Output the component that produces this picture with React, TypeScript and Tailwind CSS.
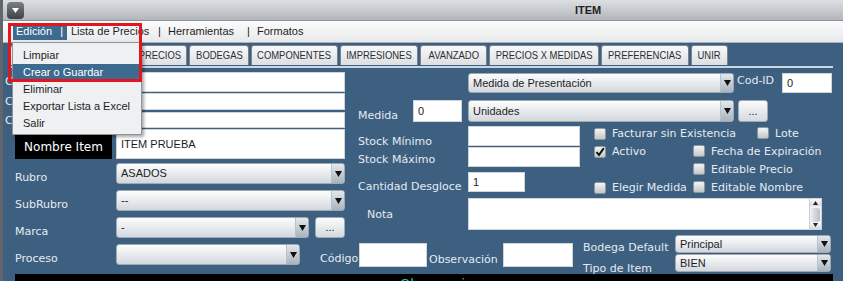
const lbl = "font-['DejaVu_Sans',sans-serif] text-[11px] leading-[13px] text-[#e4ebf2] whitespace-nowrap"
const fld = "font-['Liberation_Sans',Arial,sans-serif] text-[11px] text-[#1d1d1d] whitespace-nowrap"
const tabFont = "font-['Liberation_Sans',Arial,sans-serif] text-[11.5px] text-[#2b2f33]"

function Arrow() {
  return (
    <svg width="7" height="6" viewBox="0 0 7 6">
      <polygon points="0,0 7,0 3.5,6" fill="#111" />
    </svg>
  )
}

function Sel({ cls, text }: { cls: string; text?: string }) {
  return (
    <div className={`flex rounded-[3px] border border-[#9fa9b3] overflow-hidden bg-linear-to-b from-[#fdfdfd] to-[#d3d8de] ${cls}`}>
      <div className={`flex-1 flex items-center pl-[4px] ${fld}`}>{text}</div>
      <div className="w-[13px] flex items-center justify-center bg-linear-to-b from-[#e3e8ed] to-[#a9b4bf] border-l border-[#b9c1ca]">
        <Arrow />
      </div>
    </div>
  )
}

function Inp({ cls, text }: { cls: string; text?: string }) {
  return <div className={`bg-white border border-[#cfd5db] flex items-center pl-[4px] ${fld} ${cls}`}>{text}</div>
}

function Btn({ cls }: { cls: string }) {
  return (
    <div className={`rounded-[3px] border border-[#9fa9b3] bg-linear-to-b from-[#fbfbfb] to-[#d5dadf] flex items-end justify-center pb-[2px] ${fld} ${cls}`}>
      ...
    </div>
  )
}

function Check({ on }: { on?: boolean }) {
  return (
    <div className="w-[12px] h-[12px] shrink-0 rounded-[2px] border border-[#8f969d] bg-linear-to-b from-[#f4f4f4] to-[#c3c6c9] flex items-center justify-center">
      {on && (
        <svg width="10" height="10" viewBox="0 0 10 10">
          <path d="M1.5 5.2 L4 8 L8.8 1.2" stroke="#111" strokeWidth="2" fill="none" />
        </svg>
      )}
    </div>
  )
}

function Cb({ text, on }: { text: string; on?: boolean }) {
  return (
    <div className="flex items-center">
      <Check on={on} />
      <span className={`ml-[6px] ${lbl}`}>{text}</span>
    </div>
  )
}

const tabs: [string, string][] = [
  ['GENERAL', 'w-[120px]'],
  ['PRECIOS', 'w-[55px]'],
  ['BODEGAS', 'w-[60px]'],
  ['COMPONENTES', 'w-[87px]'],
  ['IMPRESIONES', 'w-[78px]'],
  ['AVANZADO', 'w-[67px]'],
  ['PRECIOS X MEDIDAS', 'w-[110px]'],
  ['PREFERENCIAS', 'w-[88px]'],
  ['UNIR', 'w-[37px]'],
]

const menuItems = ['Limpiar', 'Crear o Guardar', 'Eliminar', 'Exportar Lista a Excel', 'Salir']

export default function App() {
  return (
    <div className="w-[843px] h-[281px] relative overflow-hidden bg-[#3d5f80] border-l-[3px] border-[#61666c] flex flex-col">
      {/* title bar */}
      <div className="h-[21px] shrink-0 flex items-center bg-linear-to-b from-[#dddfe2] to-[#b2b6bb] border-b border-[#8f949a]">
        <div className="ml-[4px] w-[17px] h-[17px] rounded-[4px] bg-linear-to-b from-[#7a7f86] to-[#3e434a] flex items-center justify-center">
          <svg width="7" height="5" viewBox="0 0 7 5">
            <polygon points="0,0 7,0 3.5,5" fill="#fff" />
          </svg>
        </div>
        <span className="ml-[551px] font-['Liberation_Sans',Arial,sans-serif] font-bold text-[11px] text-[#222]">ITEM</span>
      </div>

      {/* menu bar */}
      <div className={`h-[22px] shrink-0 flex items-center bg-linear-to-b from-[#fcfcfc] to-[#e8e9eb] border-b border-[#aab1b8] ${fld} text-[11.5px]`}>
        <div className="ml-[10px] w-[54px] h-[16px] flex items-center bg-[#3d6a8f] text-white pl-[3px] pr-[4px]">
          <span>Edición</span>
          <span className="ml-auto">|</span>
        </div>
        <span className="ml-[4px] w-[84px]">Lista de Precios</span>
        <span className="w-[9px] text-center">|</span>
        <span className="ml-[4px] w-[76px]">Herramientas</span>
        <span className="w-[9px] text-center">|</span>
        <span className="ml-[4px]">Formatos</span>
      </div>

      {/* tabs */}
      <div className="mt-[2px] h-[20px] shrink-0 flex items-end gap-[2px] pl-[7px]">
        {tabs.map(([t, w]) => (
          <div
            key={t}
            className={`${w} h-[20px] flex items-center justify-center rounded-t-[3px] border border-b-0 border-[#7b838c] bg-linear-to-b from-[#f8f9fa] to-[#dcdfe3] ${tabFont}`}
          >
            <span className="inline-block shrink-0 whitespace-nowrap scale-x-[0.82]">{t}</span>
          </div>
        ))}
      </div>
      <div className="mt-[1px] ml-[7px] w-[823px] h-[2px] shrink-0 bg-[#cad7e3]" />

      {/* body */}
      <div className="h-[170px] shrink-0 flex">
        {/* left column */}
        <div className="w-[343px] flex flex-col">
          <div className="mt-[4px] h-[20px] flex">
            <span className={`w-[113px] pl-[2px] pt-[3px] ${lbl}`}>Código</span>
            <Inp cls="w-[229px]" text="001" />
          </div>
          <div className="mt-[1px] h-[17px] flex">
            <span className={`w-[113px] pl-[2px] pt-[2px] ${lbl}`}>Código Barra</span>
            <Inp cls="w-[229px]" />
          </div>
          <div className="mt-[2px] h-[16px] flex">
            <span className={`w-[113px] pl-[2px] pt-[2px] ${lbl}`}>Código Alterno</span>
            <Inp cls="w-[229px]" />
          </div>
          <div className="mt-[1px] h-[30px] flex">
            <div className="ml-[12px] w-[97px] bg-black text-white flex items-center justify-center font-['DejaVu_Sans',sans-serif] text-[12px] pt-[6px]">
              Nombre Item
            </div>
            <Inp cls="ml-[4px] w-[229px]" text="ITEM PRUEBA" />
          </div>
          <div className="mt-[4px] h-[21px] flex">
            <span className={`w-[113px] pl-[12px] pt-[8px] ${lbl}`}>Rubro</span>
            <Sel cls="w-[229px]" text="ASADOS" />
          </div>
          <div className="mt-[6px] h-[21px] flex">
            <span className={`w-[113px] pl-[12px] pt-[8px] ${lbl}`}>SubRubro</span>
            <Sel cls="w-[229px]" text="--" />
          </div>
          <div className="mt-[6px] h-[21px] flex">
            <span className={`w-[113px] pl-[12px] pt-[8px] ${lbl}`}>Marca</span>
            <Sel cls="w-[193px]" text="-" />
            <Btn cls="ml-[6px] w-[30px]" />
          </div>
        </div>

        {/* right column */}
        <div className="flex-1 flex flex-col">
          <div className="mt-[5px] h-[20px] flex">
            <Sel cls="ml-[122px] w-[266px]" text="Medida de Presentación" />
            <span className={`ml-[3px] w-[45px] pt-[1px] ${lbl}`}>Cod-ID</span>
            <Inp cls="w-[50px]" text="0" />
          </div>
          <div className="mt-[7px] h-[22px] flex">
            <span className={`ml-[12px] w-[55px] pt-[9px] ${lbl}`}>Medida</span>
            <Inp cls="w-[49px]" text="0" />
            <Sel cls="ml-[6px] w-[266px]" text="Unidades" />
            <Btn cls="ml-[4px] w-[30px]" />
          </div>
          <div className="mt-[4px] h-[67px] flex">
            <div className="ml-[12px] w-[110px] flex flex-col">
              <span className={`mt-[9px] ${lbl}`}>Stock Mínimo</span>
              <span className={`mt-[5px] ${lbl}`}>Stock Máximo</span>
              <span className={`mt-[14px] ${lbl}`}>Cantidad Desgloce</span>
            </div>
            <div className="w-[112px] flex flex-col">
              <Inp cls="h-[20px]" />
              <Inp cls="mt-[1px] h-[20px]" />
              <Inp cls="mt-[5px] h-[20px] w-[57px]" text="1" />
            </div>
            <div className="ml-[14px] flex flex-col">
              <div className="mt-[1px] h-[12px] flex">
                <div className="w-[163px]">
                  <Cb text="Facturar sin Existencia" />
                </div>
                <Cb text="Lote" />
              </div>
              <div className="mt-[6px] h-[12px] flex">
                <div className="w-[99px]">
                  <Cb text="Activo" on />
                </div>
                <Cb text="Fecha de Expiración" />
              </div>
              <div className="mt-[6px] h-[12px] flex">
                <div className="w-[99px]" />
                <Cb text="Editable Precio" />
              </div>
              <div className="mt-[6px] h-[12px] flex">
                <div className="w-[99px]">
                  <Cb text="Elegir Medida" />
                </div>
                <Cb text="Editable Nombre" />
              </div>
            </div>
          </div>
          <div className="mt-[5px] h-[32px] flex">
            <span className={`ml-[21px] w-[101px] pt-[10px] ${lbl}`}>Nota</span>
            <div className="w-[354px] bg-white border border-[#cfd5db] flex justify-end">
              <div className="w-[12px] flex flex-col bg-[#eef0f2] border-l border-[#c8ced4]">
                <div className="h-[8px] flex items-center justify-center bg-linear-to-b from-[#fafafa] to-[#d5d9dd]">
                  <svg width="5" height="4" viewBox="0 0 5 4">
                    <polygon points="0,4 5,4 2.5,0" fill="#222" />
                  </svg>
                </div>
                <div className="mt-[2px] mx-[1px] h-[14px] rounded-[3px] bg-linear-to-r from-[#e9ebee] to-[#b9bfc6]" />
                <div className="mt-auto h-[8px] flex items-center justify-center bg-linear-to-b from-[#fafafa] to-[#d5d9dd]">
                  <svg width="5" height="4" viewBox="0 0 5 4">
                    <polygon points="0,0 5,0 2.5,4" fill="#222" />
                  </svg>
                </div>
              </div>
            </div>
          </div>
        </div>
      </div>

      {/* bottom row */}
      <div className="h-[36px] shrink-0 flex items-start">
        <span className={`ml-[12px] w-[101px] mt-[14px] ${lbl}`}>Proceso</span>
        <Sel cls="mt-[6px] h-[21px] w-[184px]" />
        <span className={`ml-[20px] w-[39px] mt-[14px] ${lbl}`}>Código</span>
        <Inp cls="mt-[5px] h-[24px] w-[68px]" />
        <span className={`ml-[2px] w-[74px] mt-[15px] ${lbl}`}>Observación</span>
        <Inp cls="mt-[5px] h-[24px] w-[70px]" />
        <div className="ml-[10px] -mt-[4px] flex">
          <div className="w-[92px] flex flex-col">
            <span className={`mt-[7px] ${lbl}`}>Bodega Default</span>
            <span className={`mt-[8px] ${lbl}`}>Tipo de Item</span>
          </div>
          <div className="w-[156px] flex flex-col">
            <Sel cls="mt-[1px] h-[18px]" text="Principal" />
            <Sel cls="mt-[1px] h-[18px]" text="BIEN" />
          </div>
        </div>
      </div>
      <div className="ml-[12px] w-[818px] h-[7px] shrink-0 bg-black overflow-hidden">
        <div className="ml-[385px] mt-[3px] font-['DejaVu_Sans',sans-serif] text-[13px] leading-[14px] text-[#37c0b3]">Observaciones</div>
      </div>

      {/* open menu */}
      <div className={`absolute left-[9px] top-[42px] w-[130px] h-[93px] bg-[#eef0f2] border border-[#8d949b] shadow-[2px_2px_3px_rgba(0,0,0,0.35)] pt-[4px] ${fld} text-[11.5px]`}>
        {menuItems.map((m) => (
          <div
            key={m}
            className={`h-[17px] flex items-center pl-[10px] ${m === 'Crear o Guardar' ? 'bg-[#3d6a8f] text-white' : ''}`}
          >
            {m}
          </div>
        ))}
      </div>
      <div className="absolute left-[5px] top-[23px] w-[134px] h-[59px] border-[3px] border-[#e3151d]" />
    </div>
  )
}
